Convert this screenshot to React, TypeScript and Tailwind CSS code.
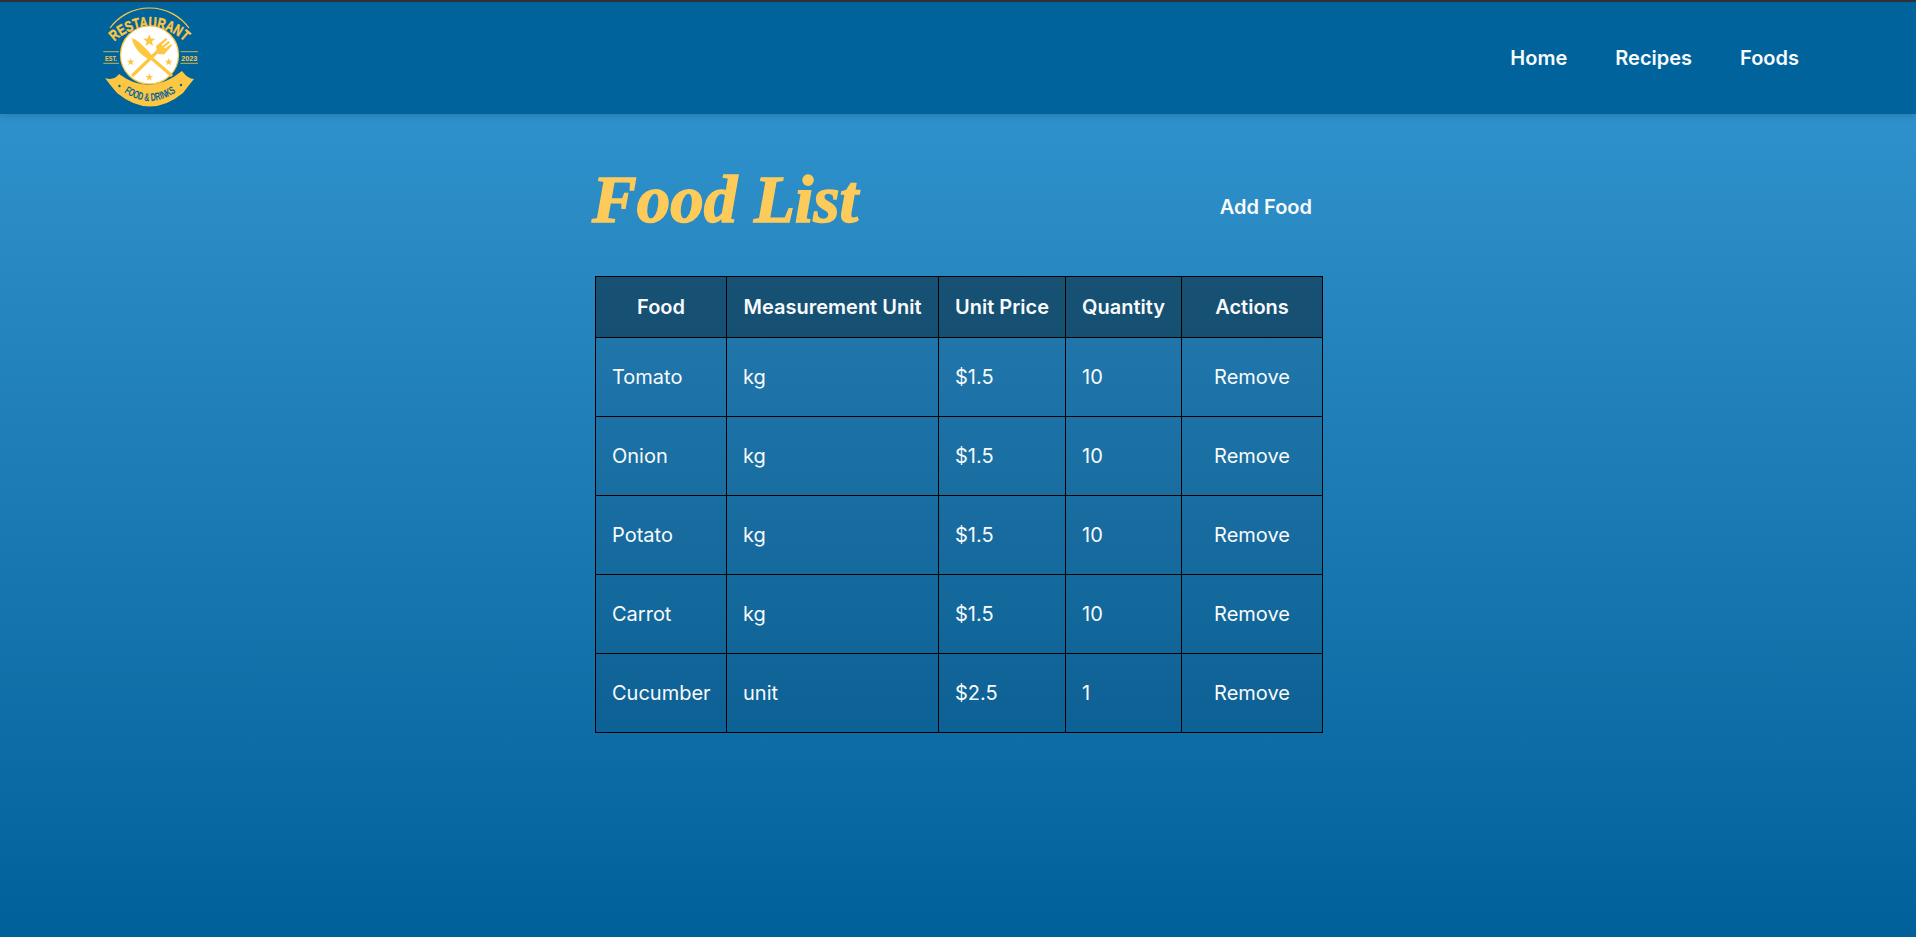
const foods = [
  { name: 'Tomato', unit: 'kg', price: '$1.5', quantity: 10 },
  { name: 'Onion', unit: 'kg', price: '$1.5', quantity: 10 },
  { name: 'Potato', unit: 'kg', price: '$1.5', quantity: 10 },
  { name: 'Carrot', unit: 'kg', price: '$1.5', quantity: 10 },
  { name: 'Cucumber', unit: 'unit', price: '$2.5', quantity: 1 },
];

const Star = ({ x, y, r }: { x: number; y: number; r: number }) => {
  const points = Array.from({ length: 10 }, (_, i) => {
    const radius = i % 2 === 0 ? r : r * 0.42;
    const angle = (Math.PI / 5) * i - Math.PI / 2;
    return `${(x + radius * Math.cos(angle)).toFixed(2)},${(y + radius * Math.sin(angle)).toFixed(2)}`;
  }).join(' ');
  return <polygon points={points} fill="#fdc741" />;
};

function Logo() {
  const gold = '#fdc741';
  const sans = "'Liberation Sans', sans-serif";
  return (
    <svg width="120" height="112" viewBox="0 2 120 112" className="block">
      <defs>
        <path id="logo-top" d="M17 51 A50 50 0 0 1 102 51" />
        <path id="logo-bottom" d="M31 90 Q59.5 112 89 90" />
      </defs>
      {/* top arc and name */}
      <path d="M20 28 A49 49 0 0 1 99 28" fill="none" stroke={gold} strokeWidth="1.2" />
      <text fontFamily={sans} fontWeight="700" fontSize="15" fill={gold} stroke={gold} strokeWidth="0.5">
        <textPath href="#logo-top" startOffset="12" textLength="77" lengthAdjust="spacingAndGlyphs">RESTAURANT</textPath>
      </text>
      {/* ribbon */}
      <path d="M15 78 Q24 81 29 74 Q60 97 92 71 Q98 79 104 79 Q99 85 93 93 Q60 120 27 93 Q20 85 15 78 Z" fill={gold} />
      <text fontFamily={sans} fontWeight="700" fontSize="11" fill="#00639c">
        <textPath href="#logo-bottom" startOffset="3.5" textLength="56" lengthAdjust="spacingAndGlyphs">FOOD &amp; DRINKS</textPath>
      </text>
      <circle cx="29.5" cy="86" r="1.2" fill="#00639c" />
      <circle cx="91" cy="85" r="1.2" fill="#00639c" />
      {/* badge */}
      <circle cx="59.5" cy="55" r="29" fill="#fff" stroke={gold} strokeWidth="1.2" />
      <Star x={59.3} y={40.7} r={6.5} />
      <Star x={40.7} y={62} r={4} />
      <Star x={78.7} y={62} r={4} />
      <Star x={59.3} y={77.3} r={4} />
      {/* knife */}
      <path d="M42 38 C49 41 57 49 63 57 L60 60 C52 56 43 48 42 38 Z" fill={gold} />
      <line x1="60" y1="57" x2="81" y2="75" stroke={gold} strokeWidth="3.4" strokeLinecap="round" />
      {/* fork */}
      <line x1="43" y1="75" x2="70" y2="49" stroke={gold} strokeWidth="3.2" strokeLinecap="round" />
      <path d="M67 52 L66 46 L76 38 L77.5 39.5 L71.5 45 L72.5 46 L78.5 41 L80 42.5 L74 47.5 L75 48.5 L81 44 L82 45.5 L74 54.5 L68 54 Z" fill={gold} />
      {/* side labels */}
      <g stroke={gold} strokeWidth="0.8">
        <line x1="13.3" y1="51.7" x2="29" y2="51.7" />
        <line x1="13.3" y1="63.3" x2="29" y2="63.3" />
        <line x1="90.5" y1="51.7" x2="108" y2="51.7" />
        <line x1="90.5" y1="63.3" x2="108" y2="63.3" />
      </g>
      <text x="15" y="60.8" textLength="11.7" lengthAdjust="spacingAndGlyphs" fontFamily={sans} fontWeight="700" fontSize="7" fill={gold}>EST.</text>
      <text x="91.2" y="60.8" textLength="16" lengthAdjust="spacingAndGlyphs" fontFamily={sans} fontWeight="700" fontSize="7" fill={gold}>2023</text>
    </svg>
  );
}

export default function App() {
  return (
    <div className="min-h-[937px] bg-gradient-to-b from-[#3498d2] to-[#00619a] font-['Inter',sans-serif] text-[#f8fafc]">
      <header className="box-border flex h-[114px] items-center justify-between border-t-2 border-[#2d3236] bg-[#00639c] pl-[90px] pr-[117px] shadow-[0_2px_8px_rgba(0,0,0,0.15)]">
        <Logo />
        <nav className="flex gap-12 text-xl font-semibold">
          <a>Home</a>
          <a>Recipes</a>
          <a>Foods</a>
        </nav>
      </header>
      <main className="ml-[595px] w-[728px] pt-[41px]">
        <div className="flex h-[121px] items-start justify-between">
          <h1 className="mt-[4px] -ml-[3px] font-['Liberation_Serif',serif] text-[67px] leading-[80px] font-bold text-[#fdcb5a] italic [-webkit-text-stroke:1.5px_#fdcb5a]">
            Food List
          </h1>
          <a className="mt-[38px] mr-[11px] text-xl font-semibold">Add Food</a>
        </div>
        <table className="w-[728px] table-fixed border-collapse border border-black text-xl">
          <colgroup>
            <col className="w-[131px]" />
            <col className="w-[212px]" />
            <col className="w-[127px]" />
            <col className="w-[116px]" />
            <col className="w-[141px]" />
          </colgroup>
          <thead>
            <tr className="h-[61px] bg-black/40">
              {['Food', 'Measurement Unit', 'Unit Price', 'Quantity', 'Actions'].map((h) => (
                <th key={h} className="border border-black font-semibold">{h}</th>
              ))}
            </tr>
          </thead>
          <tbody>
            {foods.map((f) => (
              <tr key={f.name} className="h-[79px] bg-black/10">
                <td className="border border-black px-4">{f.name}</td>
                <td className="border border-black px-4">{f.unit}</td>
                <td className="border border-black px-4">{f.price}</td>
                <td className="border border-black px-4">{f.quantity}</td>
                <td className="border border-black px-4 text-center">Remove</td>
              </tr>
            ))}
          </tbody>
        </table>
      </main>
    </div>
  );
}
